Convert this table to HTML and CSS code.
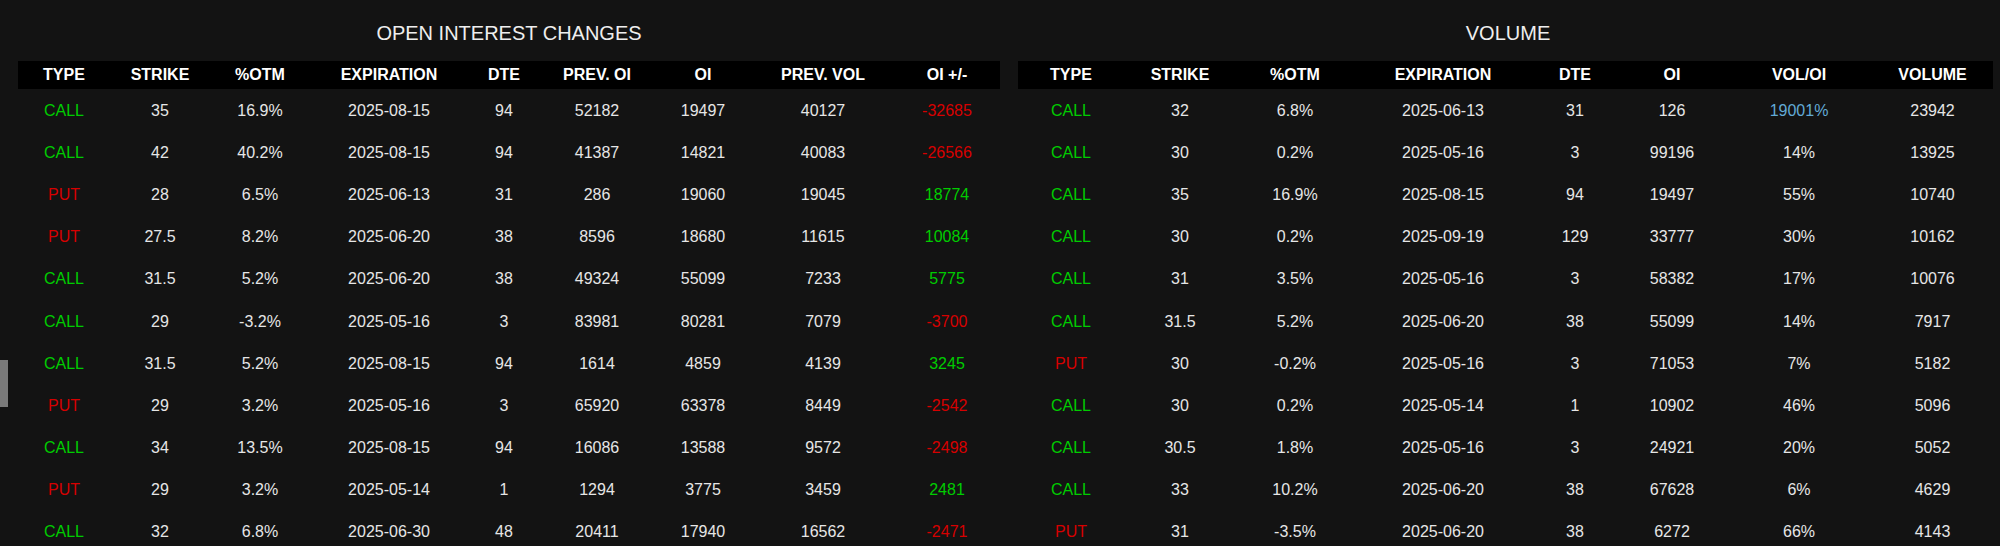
FILE: index.html
```html
<!DOCTYPE html>
<html lang="en">
<head>
<meta charset="utf-8">
<title>Options Flow</title>
<link rel="stylesheet" href="styles.css">
</head>
<body>
<div class="handle"></div>
<main class="page">
  <section class="panel">
    <h2 class="panel-title">OPEN INTEREST CHANGES</h2>
    <table class="grid grid-oi">
      <colgroup>
        <col class="c-type"><col class="c-strike"><col class="c-otm"><col class="c-exp"><col class="c-dte"><col class="c-prevoi"><col class="c-oi"><col class="c-prevvol"><col class="c-chg">
      </colgroup>
      <thead>
        <tr><th>TYPE</th><th>STRIKE</th><th>%OTM</th><th>EXPIRATION</th><th>DTE</th><th>PREV. OI</th><th>OI</th><th>PREV. VOL</th><th>OI +/-</th></tr>
      </thead>
      <tbody>
        <tr><td class="call">CALL</td><td>35</td><td>16.9%</td><td>2025-08-15</td><td>94</td><td>52182</td><td>19497</td><td>40127</td><td class="neg">-32685</td></tr>
        <tr><td class="call">CALL</td><td>42</td><td>40.2%</td><td>2025-08-15</td><td>94</td><td>41387</td><td>14821</td><td>40083</td><td class="neg">-26566</td></tr>
        <tr><td class="put">PUT</td><td>28</td><td>6.5%</td><td>2025-06-13</td><td>31</td><td>286</td><td>19060</td><td>19045</td><td class="pos">18774</td></tr>
        <tr><td class="put">PUT</td><td>27.5</td><td>8.2%</td><td>2025-06-20</td><td>38</td><td>8596</td><td>18680</td><td>11615</td><td class="pos">10084</td></tr>
        <tr><td class="call">CALL</td><td>31.5</td><td>5.2%</td><td>2025-06-20</td><td>38</td><td>49324</td><td>55099</td><td>7233</td><td class="pos">5775</td></tr>
        <tr><td class="call">CALL</td><td>29</td><td>-3.2%</td><td>2025-05-16</td><td>3</td><td>83981</td><td>80281</td><td>7079</td><td class="neg">-3700</td></tr>
        <tr><td class="call">CALL</td><td>31.5</td><td>5.2%</td><td>2025-08-15</td><td>94</td><td>1614</td><td>4859</td><td>4139</td><td class="pos">3245</td></tr>
        <tr><td class="put">PUT</td><td>29</td><td>3.2%</td><td>2025-05-16</td><td>3</td><td>65920</td><td>63378</td><td>8449</td><td class="neg">-2542</td></tr>
        <tr><td class="call">CALL</td><td>34</td><td>13.5%</td><td>2025-08-15</td><td>94</td><td>16086</td><td>13588</td><td>9572</td><td class="neg">-2498</td></tr>
        <tr><td class="put">PUT</td><td>29</td><td>3.2%</td><td>2025-05-14</td><td>1</td><td>1294</td><td>3775</td><td>3459</td><td class="pos">2481</td></tr>
        <tr><td class="call">CALL</td><td>32</td><td>6.8%</td><td>2025-06-30</td><td>48</td><td>20411</td><td>17940</td><td>16562</td><td class="neg">-2471</td></tr>
      </tbody>
    </table>
  </section>
  <section class="panel panel-right">
    <h2 class="panel-title">VOLUME</h2>
    <table class="grid grid-vol">
      <colgroup>
        <col class="v-type"><col class="v-strike"><col class="v-otm"><col class="v-exp"><col class="v-dte"><col class="v-oi"><col class="v-ratio"><col class="v-vol">
      </colgroup>
      <thead>
        <tr><th>TYPE</th><th>STRIKE</th><th>%OTM</th><th>EXPIRATION</th><th>DTE</th><th>OI</th><th>VOL/OI</th><th>VOLUME</th></tr>
      </thead>
      <tbody>
        <tr><td class="call">CALL</td><td>32</td><td>6.8%</td><td>2025-06-13</td><td>31</td><td>126</td><td class="hot">19001%</td><td>23942</td></tr>
        <tr><td class="call">CALL</td><td>30</td><td>0.2%</td><td>2025-05-16</td><td>3</td><td>99196</td><td>14%</td><td>13925</td></tr>
        <tr><td class="call">CALL</td><td>35</td><td>16.9%</td><td>2025-08-15</td><td>94</td><td>19497</td><td>55%</td><td>10740</td></tr>
        <tr><td class="call">CALL</td><td>30</td><td>0.2%</td><td>2025-09-19</td><td>129</td><td>33777</td><td>30%</td><td>10162</td></tr>
        <tr><td class="call">CALL</td><td>31</td><td>3.5%</td><td>2025-05-16</td><td>3</td><td>58382</td><td>17%</td><td>10076</td></tr>
        <tr><td class="call">CALL</td><td>31.5</td><td>5.2%</td><td>2025-06-20</td><td>38</td><td>55099</td><td>14%</td><td>7917</td></tr>
        <tr><td class="put">PUT</td><td>30</td><td>-0.2%</td><td>2025-05-16</td><td>3</td><td>71053</td><td>7%</td><td>5182</td></tr>
        <tr><td class="call">CALL</td><td>30</td><td>0.2%</td><td>2025-05-14</td><td>1</td><td>10902</td><td>46%</td><td>5096</td></tr>
        <tr><td class="call">CALL</td><td>30.5</td><td>1.8%</td><td>2025-05-16</td><td>3</td><td>24921</td><td>20%</td><td>5052</td></tr>
        <tr><td class="call">CALL</td><td>33</td><td>10.2%</td><td>2025-06-20</td><td>38</td><td>67628</td><td>6%</td><td>4629</td></tr>
        <tr><td class="put">PUT</td><td>31</td><td>-3.5%</td><td>2025-06-20</td><td>38</td><td>6272</td><td>66%</td><td>4143</td></tr>
      </tbody>
    </table>
  </section>
</main>
</body>
</html>
```

FILE: styles.css
```css
html, body {
  margin: 0;
  padding: 0;
  background: #131313;
  overflow: hidden;
}

body {
  font-family: "Liberation Sans", Arial, sans-serif;
  color: #e6e6e6;
  position: relative;
}

.handle {
  position: absolute;
  left: 0;
  top: 360px;
  width: 8px;
  height: 47px;
  background: #7a7a7a;
}

.page {
  display: flex;
  width: 2000px;
}

.panel {
  flex: 0 0 50%;
  box-sizing: border-box;
  padding: 22px 0 0 18px;
  min-width: 0;
}

.panel-right {
  padding-right: 7px;
}

.panel-title {
  margin: 0 0 16px;
  font-size: 20px;
  line-height: 23px;
  font-weight: normal;
  color: #eeeeee;
  text-align: center;
}

.panel-right .panel-title {
  padding-left: 5px;
}

.grid {
  width: 100%;
  table-layout: fixed;
  border-collapse: collapse;
  font-size: 16px;
}

.grid th {
  background: #000000;
  color: #ffffff;
  font-weight: bold;
  height: 28px;
  padding: 0;
  text-align: center;
  line-height: 18px;
}

.grid td {
  height: 41.2px;
  padding: 1px 0 0;
  text-align: center;
  line-height: 18px;
  color: #e6e6e6;
}

.grid td.call, .grid td.pos { color: #00cc00; }
.grid td.put, .grid td.neg { color: #d60000; }
.grid td.hot { color: #62aad6; }

/* open interest table columns */
.c-type { width: 92px; }
.c-strike { width: 100px; }
.c-otm { width: 100px; }
.c-exp { width: 158px; }
.c-dte { width: 72px; }
.c-prevoi { width: 114px; }
.c-oi { width: 98px; }
.c-prevvol { width: 142px; }
.c-chg { width: 106px; }

/* volume table columns */
.v-type { width: 106px; }
.v-strike { width: 112px; }
.v-otm { width: 118px; }
.v-exp { width: 178px; }
.v-dte { width: 86px; }
.v-oi { width: 108px; }
.v-ratio { width: 146px; }
.v-vol { width: 121px; }
```
